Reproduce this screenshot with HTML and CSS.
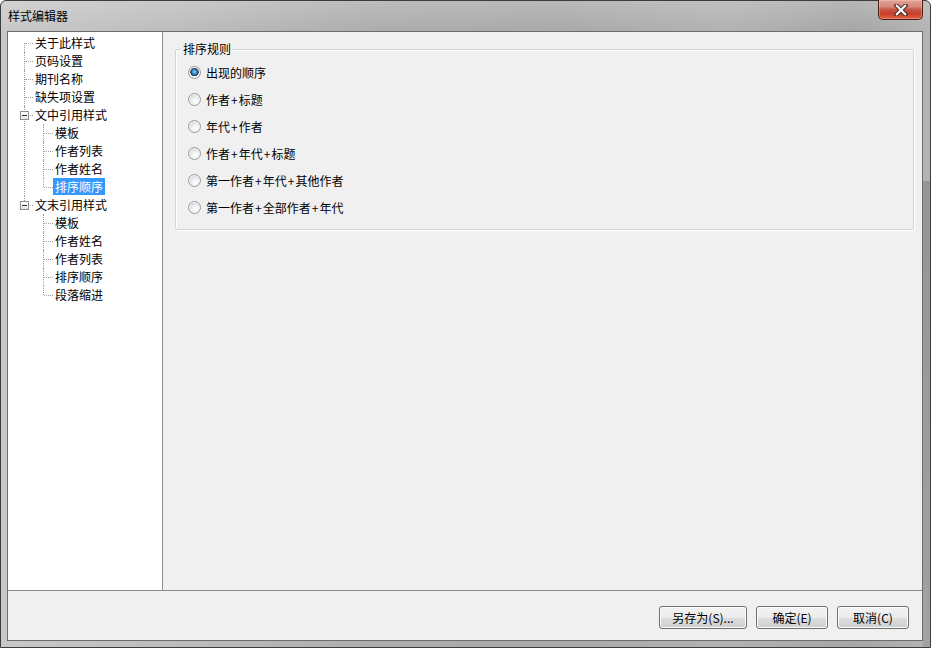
FILE: index.html
```html
<!DOCTYPE html>
<html lang="zh-CN">
<head>
<meta charset="utf-8">
<title>样式编辑器</title>
<link rel="stylesheet" href="styles.css">
</head>
<body>
<div class="window">
  <div class="titlebar">
    <span class="title">样式编辑器</span>
    <button class="close" aria-label="关闭">
      <svg width="14" height="12" viewBox="0 0 14 12">
        <path d="M2.5 1.5 L11.5 10.5 M11.5 1.5 L2.5 10.5" stroke="#4a2a25" stroke-width="4.2" stroke-linecap="square" fill="none"/>
        <path d="M2.8 1.8 L11.2 10.2 M11.2 1.8 L2.8 10.2" stroke="#ffffff" stroke-width="2.2" stroke-linecap="square" fill="none"/>
      </svg>
    </button>
  </div>
  <div class="client">
    <div class="main">
      <div class="tree">
        <ul class="root">
          <li><div class="row"><span class="label">关于此样式</span></div></li>
          <li><div class="row"><span class="label">页码设置</span></div></li>
          <li><div class="row"><span class="label">期刊名称</span></div></li>
          <li><div class="row"><span class="label">缺失项设置</span></div></li>
          <li>
            <div class="row"><span class="toggle"></span><span class="label">文中引用样式</span></div>
            <ul class="children">
              <li><div class="row"><span class="label">模板</span></div></li>
              <li><div class="row"><span class="label">作者列表</span></div></li>
              <li><div class="row"><span class="label">作者姓名</span></div></li>
              <li><div class="row"><span class="label selected">排序顺序</span></div></li>
            </ul>
          </li>
          <li>
            <div class="row"><span class="toggle"></span><span class="label">文末引用样式</span></div>
            <ul class="children">
              <li><div class="row"><span class="label">模板</span></div></li>
              <li><div class="row"><span class="label">作者姓名</span></div></li>
              <li><div class="row"><span class="label">作者列表</span></div></li>
              <li><div class="row"><span class="label">排序顺序</span></div></li>
              <li><div class="row"><span class="label">段落缩进</span></div></li>
            </ul>
          </li>
        </ul>
      </div>
      <div class="content">
        <div class="group">
          <div class="group-title">排序规则</div>
          <ul class="radios">
            <li class="radio checked"><span class="dot"></span><span>出现的顺序</span></li>
            <li class="radio"><span class="dot"></span><span>作者<span class="plus">+</span>标题</span></li>
            <li class="radio"><span class="dot"></span><span>年代<span class="plus">+</span>作者</span></li>
            <li class="radio"><span class="dot"></span><span>作者<span class="plus">+</span>年代<span class="plus">+</span>标题</span></li>
            <li class="radio"><span class="dot"></span><span>第一作者<span class="plus">+</span>年代<span class="plus">+</span>其他作者</span></li>
            <li class="radio"><span class="dot"></span><span>第一作者<span class="plus">+</span>全部作者<span class="plus">+</span>年代</span></li>
          </ul>
        </div>
      </div>
    </div>
    <div class="footer">
      <button class="btn btn-wide">另存为(S)...</button>
      <button class="btn">确定(E)</button>
      <button class="btn">取消(C)</button>
    </div>
  </div>
</div>
</body>
</html>
```
FILE: styles.css
```css
* { box-sizing: border-box; }
html, body { margin: 0; padding: 0; }
body {
  width: 931px;
  height: 648px;
  overflow: hidden;
  background: #ffffff;
  font-family: "Noto Sans CJK SC", "Microsoft YaHei", sans-serif;
  font-size: 12px;
  color: #000;
}
ul { list-style: none; margin: 0; padding: 0; }

.window {
  width: 931px;
  height: 648px;
  display: flex;
  flex-direction: column;
  border: 1px solid #3c3c3c;
  border-radius: 6px 6px 0 0;
  padding: 0 7px 6px 6px;
  background:
    linear-gradient(#959595, #a2a2a2) right 0 top 180px / 7px 470px no-repeat,
    linear-gradient(to bottom, rgba(255,255,255,0.18), rgba(255,255,255,0) 30px),
    linear-gradient(to right, #c8c8c8 0%, #bcbcbc 20%, #adadad 40%, #a9a9a9 60%, #b2b2b2 78%, #a6a6a6 92%, #b4b4b4 100%);
}

.titlebar {
  height: 30px;
  flex: none;
  display: flex;
  align-items: flex-start;
}
.title {
  padding-left: 1px;
  margin-top: 6px;
  line-height: 17px;
  font-size: 12px;
  color: #000;
}
.close {
  margin-left: auto;
  margin-top: -1px;
  width: 45px;
  height: 20px;
  padding: 0;
  border: 1px solid #4b1d15;
  border-top: none;
  border-radius: 0 0 5px 5px;
  background: linear-gradient(to bottom, #e2a597 0%, #d6897a 35%, #c65645 50%, #c63f2a 72%, #e2623f 100%);
  box-shadow: inset 0 0 0 1px rgba(255, 210, 200, 0.35);
  display: flex;
  align-items: center;
  justify-content: center;
}
.close svg { display: block; }

.client {
  flex: 1;
  display: flex;
  flex-direction: column;
  border: 1px solid #6d6d6d;
  background: #f0f0f0;
}
.main {
  flex: 1;
  display: flex;
  min-height: 0;
}

/* tree view */
.tree {
  width: 155px;
  flex: none;
  background: #ffffff;
  border-right: 1px solid #8f8f8f;
  padding-top: 2px;
}
.tree li { position: relative; }
.row {
  position: relative;
  height: 18px;
  display: flex;
  align-items: center;
  padding-left: 25px;
}
.label {
  padding: 0 2px;
  line-height: 18px;
  height: 18px;
  white-space: nowrap;
}
.label.selected {
  background: #3399ff;
  color: #ffffff;
  line-height: 17px;
  height: 17px;
  margin-top: -1px;
}
.root > li::before {
  content: "";
  position: absolute;
  left: 16px;
  top: 0;
  bottom: 0;
  border-left: 1px dotted #a0a0a0;
}
.root > li:first-child::before { top: 9px; }
.root > li:last-child::before { bottom: auto; height: 9px; }
.root > li > .row::after {
  content: "";
  position: absolute;
  left: 17px;
  top: 9px;
  width: 8px;
  border-top: 1px dotted #a0a0a0;
}
.children .row { padding-left: 45px; }
.children > li::before {
  content: "";
  position: absolute;
  left: 35px;
  top: 0;
  bottom: 0;
  border-left: 1px dotted #a0a0a0;
}
.children > li:last-child::before { bottom: auto; height: 9px; }
.children > li > .row::after {
  content: "";
  position: absolute;
  left: 36px;
  top: 9px;
  width: 9px;
  border-top: 1px dotted #a0a0a0;
}
.toggle {
  position: absolute;
  left: 12px;
  top: 5px;
  width: 9px;
  height: 9px;
  border: 1px solid #8e8e8e;
  background: linear-gradient(#ffffff, #e6e6e6);
  z-index: 1;
}
.toggle::after {
  content: "";
  position: absolute;
  left: 1px;
  top: 3px;
  width: 5px;
  height: 1px;
  background: #2c2c2c;
}

/* right panel */
.content {
  flex: 1;
  padding: 17px 8px 0 12px;
}
.group {
  border: 1px solid #d4d4d4;
  border-radius: 2px;
  box-shadow: 1px 1px 0 #ffffff, inset 1px 1px 0 #ffffff;
  display: flex;
  flex-direction: column;
  padding: 0 0 8px 12px;
}
.group-title {
  align-self: flex-start;
  margin: -8px 0 0 -7px;
  padding: 0 2px;
  line-height: 14px;
  background: #f0f0f0;
}
.radios { margin-top: 3px; }
.radio {
  height: 27px;
  display: flex;
  align-items: center;
}
.plus { margin: 0 1px; }
.dot {
  width: 13px;
  height: 13px;
  border-radius: 50%;
  border: 1px solid #9a9a9a;
  margin-right: 5px;
  background: radial-gradient(circle at 60% 65%, #ffffff 0, #f4f4f4 3px, #dcdcdc 6px);
  box-shadow: inset 0 0 0 1px #f6f6f6;
}
.radio.checked .dot {
  background:
    radial-gradient(circle at 50% 45%, #9fd6f4 0, #4fa1d4 1.6px, #1f6496 3px, #183f5e 4px, rgba(0,0,0,0) 4.5px),
    radial-gradient(circle at 60% 65%, #ffffff 0, #f4f4f4 3px, #dcdcdc 6px);
}

/* footer buttons */
.footer {
  height: 50px;
  flex: none;
  border-top: 1px solid #8a8a8a;
  display: flex;
  justify-content: flex-end;
  align-items: flex-start;
  gap: 9px;
  padding: 15px 13px 0 0;
}
.btn {
  width: 72px;
  height: 23px;
  padding: 0;
  border: 1px solid #707070;
  border-radius: 3px;
  background: linear-gradient(to bottom, #f3f3f3 0%, #ebebeb 50%, #dddddd 51%, #cfcfcf 100%);
  box-shadow: inset 0 0 0 1px #fbfbfb;
  font-family: "Noto Sans CJK SC", "Microsoft YaHei", sans-serif;
  font-size: 12px;
  line-height: 20px;
  color: #000;
}
.btn-wide { width: 88px; }
```
